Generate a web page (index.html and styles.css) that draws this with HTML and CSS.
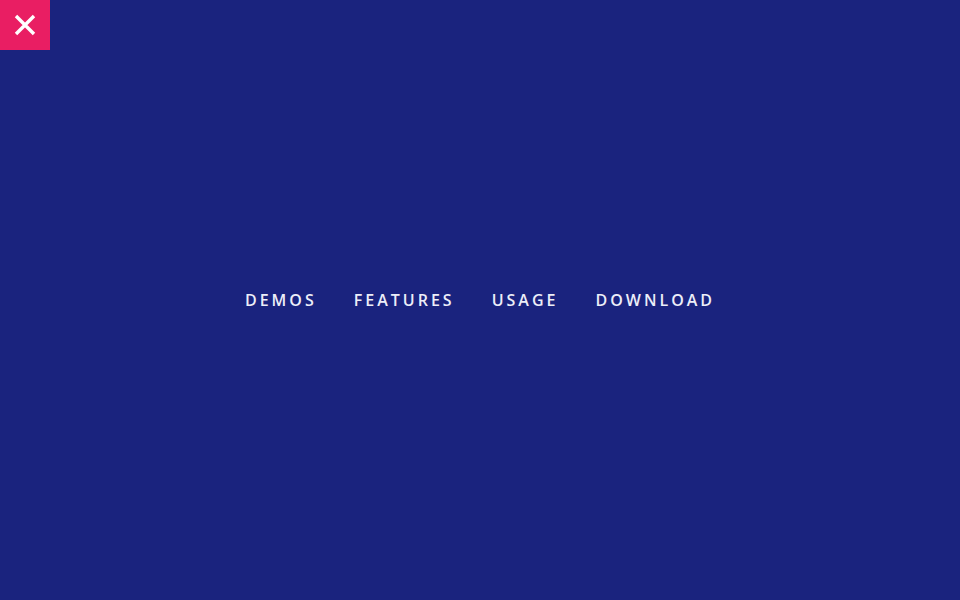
FILE: index.html
```html
<!DOCTYPE html>
<html>
<head>
<meta charset="utf-8">
<link rel="stylesheet" href="styles.css">
</head>
<body>
<button class="close" aria-label="Close">
<svg width="22" height="22" viewBox="0 0 22 22"><path d="M2 2 L20 20 M20 2 L2 20" stroke="#fff" stroke-width="3.4" stroke-linecap="butt"/></svg>
</button>
<nav class="menu">
<a href="#">DEMOS</a>
<a href="#">FEATURES</a>
<a href="#">USAGE</a>
<a href="#">DOWNLOAD</a>
</nav>
</body>
</html>
```
FILE: styles.css
```css
html, body {
  margin: 0;
  height: 100%;
}
body {
  background: #1a237e;
  display: flex;
  align-items: center;
  justify-content: center;
  font-family: "Open Sans", "Liberation Sans", sans-serif;
}
.close {
  position: absolute;
  top: 0;
  left: 0;
  width: 50px;
  height: 50px;
  border: 0;
  padding: 0;
  background: #e91e63;
  display: flex;
  align-items: center;
  justify-content: center;
}
.menu {
  display: flex;
  gap: 37px;
}
.menu a {
  color: #eceef8;
  text-decoration: none;
  font-size: 16px;
  font-weight: 600;
  letter-spacing: 3px;
  line-height: 20px;
}
```
